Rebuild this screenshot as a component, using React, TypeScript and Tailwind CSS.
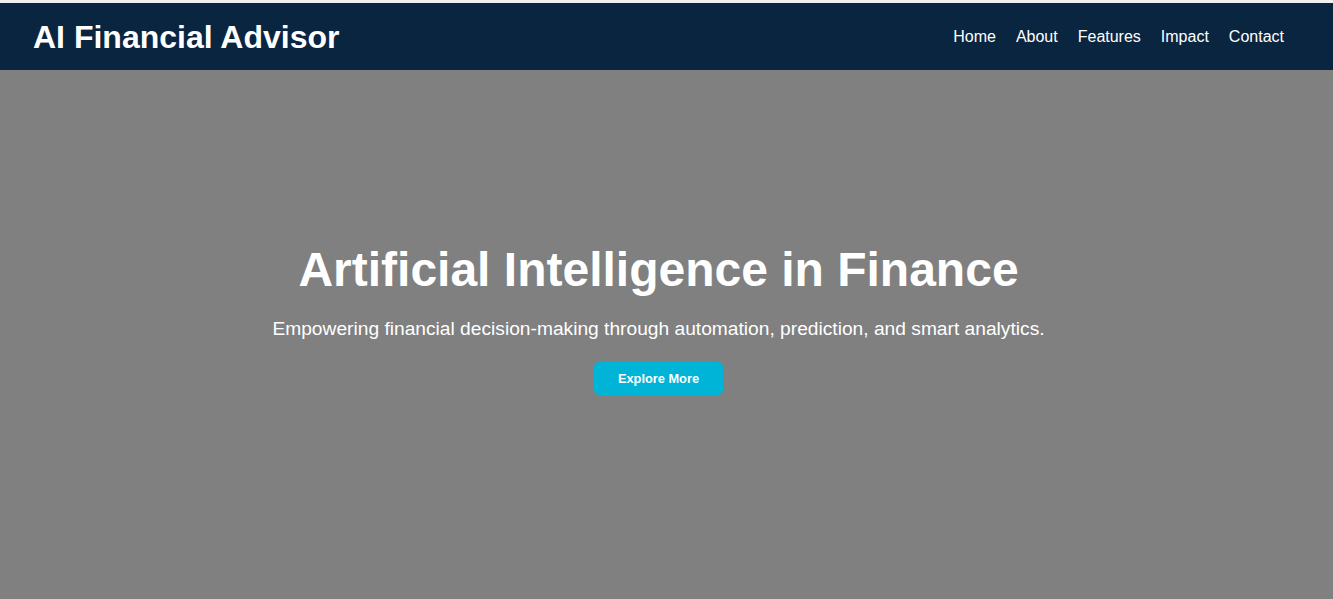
const links = ["Home", "About", "Features", "Impact", "Contact"];

export default function App() {
    return (
        <div className="min-h-screen bg-[#808080] font-['Liberation_Sans',Arial,sans-serif]">
            <div className="h-[3px] bg-[#f0f0f0]"></div>
            <header className="flex items-center justify-between bg-[#0a2540] h-[67px] pl-[33px] pr-[49px] text-white">
                <h1 className="text-[32px] font-bold leading-none">AI Financial Advisor</h1>
                <nav className="flex gap-[20px] text-[16px]">
                    {links.map((l) => (
                        <a key={l} href="#" className="text-white">{l}</a>
                    ))}
                </nav>
            </header>
            <section className="flex flex-col items-center text-center text-white pt-[172px] pb-[200px] pr-[16px]">
                <h2 className="text-[48px] font-bold leading-[55px]">Artificial Intelligence in Finance</h2>
                <p className="mt-[21px] text-[19.2px] leading-[22px]">Empowering financial decision-making through automation, prediction, and smart analytics.</p>
                <button className="mt-[22px] w-[129px] h-[33px] rounded-[5px] bg-[#00b4d8] text-white text-[12.8px] font-bold">Explore More</button>
            </section>
        </div>
    );
}
